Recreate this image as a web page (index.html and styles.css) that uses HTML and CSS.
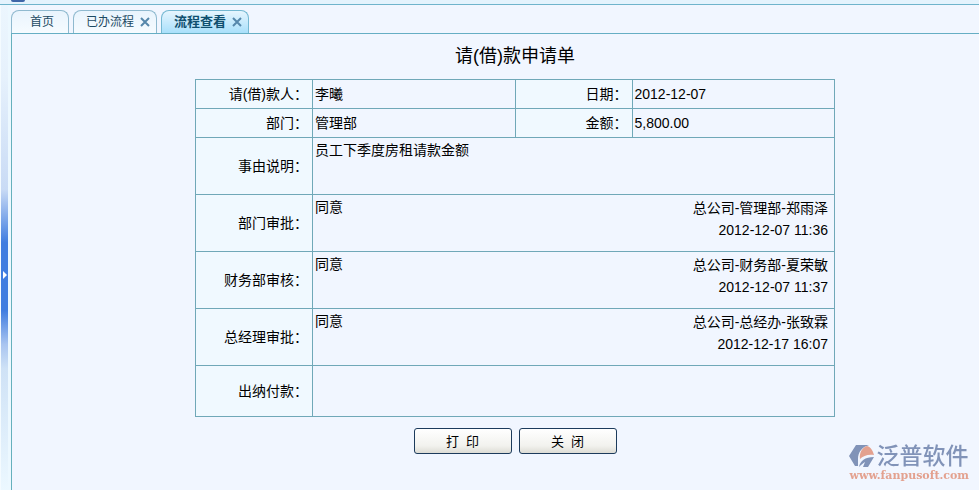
FILE: index.html
```html
<!DOCTYPE html>
<html lang="zh-CN">
<head>
    <meta charset="UTF-8">
    <meta name="viewport" content="width=device-width, initial-scale=1.0">
    <title>请(借)款申请单</title>
    <link rel="stylesheet" href="styles.css">
</head>
<body>
    <div class="top-bar"><span class="top-icon"></span></div>

    <div class="workspace">
        <button class="splitter" type="button" aria-label="展开菜单">
            <svg width="4" height="8" viewBox="0 0 4 8"><path d="M0 0L4 4L0 8Z" fill="#fff"/></svg>
        </button>

        <div class="main">
            <nav class="tabs">
                <div class="tab tab-home"><a href="#">首页</a></div>
                <div class="tab">
                    <a href="#">已办流程</a>
                    <button class="tab-close" type="button" aria-label="关闭已办流程">
                        <svg width="12" height="12" viewBox="0 0 12 12"><path d="M2 2L10 10M10 2L2 10"/></svg>
                    </button>
                </div>
                <div class="tab tab-active">
                    <a href="#">流程查看</a>
                    <button class="tab-close" type="button" aria-label="关闭流程查看">
                        <svg width="12" height="12" viewBox="0 0 12 12"><path d="M2 2L10 10M10 2L2 10"/></svg>
                    </button>
                </div>
            </nav>

            <div class="panel">
                <h1 class="form-title">请(借)款申请单</h1>

                <table class="form-table">
                    <colgroup>
                        <col class="col-label">
                        <col>
                        <col class="col-label">
                        <col>
                    </colgroup>
                    <tr>
                        <th scope="row">请(借)款人：</th>
                        <td>李曦</td>
                        <th scope="row">日期：</th>
                        <td>2012-12-07</td>
                    </tr>
                    <tr>
                        <th scope="row">部门：</th>
                        <td>管理部</td>
                        <th scope="row">金额：</th>
                        <td>5,800.00</td>
                    </tr>
                    <tr class="row-tall">
                        <th scope="row">事由说明：</th>
                        <td colspan="3">员工下季度房租请款金额</td>
                    </tr>
                    <tr class="row-tall">
                        <th scope="row">部门审批：</th>
                        <td colspan="3">
                            <div class="approval">
                                <span>同意</span>
                                <div class="sign">总公司-管理部-郑雨泽<br>2012-12-07 11:36</div>
                            </div>
                        </td>
                    </tr>
                    <tr class="row-tall">
                        <th scope="row">财务部审核：</th>
                        <td colspan="3">
                            <div class="approval">
                                <span>同意</span>
                                <div class="sign">总公司-财务部-夏荣敏<br>2012-12-07 11:37</div>
                            </div>
                        </td>
                    </tr>
                    <tr class="row-tall">
                        <th scope="row">总经理审批：</th>
                        <td colspan="3">
                            <div class="approval">
                                <span>同意</span>
                                <div class="sign">总公司-总经办-张致霖<br>2012-12-17 16:07</div>
                            </div>
                        </td>
                    </tr>
                    <tr class="row-pay">
                        <th scope="row">出纳付款：</th>
                        <td colspan="3"></td>
                    </tr>
                </table>

                <div class="actions">
                    <button class="button" type="button">打&nbsp; 印</button>
                    <button class="button" type="button">关&nbsp; 闭</button>
                </div>
            </div>
        </div>
    </div>

    <div class="brand">
        <div class="brand-row">
            <svg class="brand-logo" width="26" height="24" viewBox="0 0 26 24">
                <path d="M7 1H20C13 3 9 8 9 15V22H6L0 12Z" fill="#8193b8"/>
                <path d="M11 15C10 8 14 3 18 2C22 3 24 7 25 11C19 10 14 12 11 15Z" fill="#e3a18f"/>
                <path d="M10 23C11 17 16 13 25 13L19 23H14L16 18C14 19 12 21 10 23Z" fill="#8193b8"/>
            </svg>
            <span class="brand-name">泛普软件</span>
        </div>
        <a class="brand-url" href="#">www.fanpusoft.com</a>
    </div>
</body>
</html>
```

FILE: styles.css
```css
* {
    box-sizing: border-box;
}

body {
    display: flex;
    flex-direction: column;
    min-height: 100vh;
    margin: 0;
    background-color: #f1f6ff;
    font-family: "Liberation Sans", "Noto Sans CJK SC", sans-serif;
    font-size: 14px;
    color: #000;
}

a {
    color: inherit;
    text-decoration: none;
}

.top-bar {
    height: 5px;
    padding-left: 11px;
    background-color: #e4f3fd;
    border-bottom: 1px solid #6fb4cc;
}

.top-icon {
    display: block;
    width: 14px;
    height: 2px;
    background-color: #3f66a8;
    border-radius: 0 0 2px 2px;
}

.workspace {
    display: flex;
    flex: 1;
    background-color: #ecf8ff;
}

/* collapse handle of the side menu */
.splitter {
    display: flex;
    align-items: center;
    width: 8px;
    margin-right: 3px;
    padding: 55px 0 0 2px;
    border: none;
    border-left: 1px solid #f4fbff;
    background: linear-gradient(#ecf6fe 0, #e6f1fc 15%, #c9dbf5 38%, #3f7de0 49%, #3f7de0 63%, #a9c5f0 70%, #cfe2f6 75%, #ecf8ff 100%);
    cursor: pointer;
}

.main {
    display: flex;
    flex: 1;
    flex-direction: column;
}

.tabs {
    display: flex;
    gap: 4px;
    height: 29px;
    padding-top: 5px;
    background-color: #f1f6ff;
    border-bottom: 1px solid #66aec4;
}

.tab {
    display: flex;
    align-items: center;
    gap: 5px;
    padding: 0 5px 0 12px;
    border: 1px solid #8fb9cf;
    border-bottom: none;
    border-radius: 8px 8px 0 0;
    background: linear-gradient(#e9f4fd, #f6fbff);
    font-size: 12px;
    line-height: 20px;
    color: #1d4a63;
}

.tab-home {
    padding: 0 14px 0 18px;
}

.tab-active {
    border-color: #74b8d2;
    background: linear-gradient(#e6f5fe, #a9e0fb);
    font-size: 13px;
    font-weight: bold;
    color: #10506f;
}

.tab-close {
    display: flex;
    padding: 0;
    border: none;
    background: none;
    cursor: pointer;
}

.tab-close path {
    fill: none;
    stroke: #5687ab;
    stroke-width: 2;
}

.panel {
    display: flex;
    flex: 1;
    flex-direction: column;
    align-items: center;
    padding: 11px 0 20px 39px;
    border-left: 1px solid #66b0bd;
    background-color: #f1f6ff;
}

.form-title {
    margin: 0 0 12px;
    font-size: 18px;
    font-weight: normal;
    line-height: 22px;
}

.form-table {
    width: 640px;
    max-width: 100%;
    border-collapse: collapse;
    table-layout: fixed;
}

.col-label {
    width: 117px;
}

.form-table th,
.form-table td {
    height: 29px;
    padding: 1px 2px 2px;
    border: 1px solid #70a8b8;
    line-height: 22px;
}

.form-table th {
    padding-right: 4px;
    background-color: #f0f9ff;
    font-weight: normal;
    text-align: right;
}

.form-table .row-tall th,
.form-table .row-tall td {
    height: 57px;
}

.form-table .row-tall td {
    vertical-align: top;
}

.form-table .row-pay th,
.form-table .row-pay td {
    height: 51px;
}

.approval {
    display: flex;
    justify-content: space-between;
}

.sign {
    padding: 1px 4px 0 0;
    text-align: right;
}

.actions {
    display: flex;
    gap: 7px;
    margin-top: 11px;
}

.button {
    width: 98px;
    height: 26px;
    padding: 0 0 2px;
    border: 1px solid #1c3b5c;
    border-radius: 3px;
    background: linear-gradient(#fff, #f2f2ee 70%, #dddcd5);
    font-family: inherit;
    font-size: 13px;
    color: #000;
    cursor: pointer;
}

.brand {
    position: fixed;
    right: 10px;
    bottom: 8px;
}

.brand-row {
    display: flex;
    align-items: center;
    gap: 1px;
}

.brand-name {
    font-size: 23px;
    font-weight: 500;
    line-height: 24px;
    color: #8193b8;
}

.brand-url {
    display: block;
    margin-top: 2px;
    font-family: "DejaVu Serif", serif;
    font-size: 11px;
    font-weight: bold;
    line-height: 12px;
    text-align: right;
    color: #e3a18f;
}
```
